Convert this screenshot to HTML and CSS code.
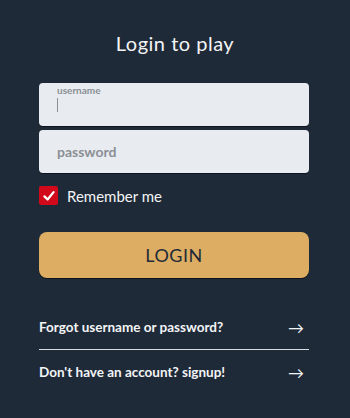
FILE: index.html
```html
<!DOCTYPE html>
<html>
<head>
<meta charset="utf-8">
<link rel="stylesheet" href="styles.css">
</head>
<body>
<main class="login">
  <h1 class="title">Login to play</h1>
  <form class="form">
    <label class="field field-filled">
      <span class="field-label">username</span>
      <span class="caret"></span>
    </label>
    <label class="field">
      <span class="placeholder">password</span>
    </label>
    <label class="remember">
      <span class="check">
        <svg viewBox="0 0 20 20" width="14" height="14"><path d="M3.5 10.5 L8 15 L16.5 4.5" fill="none" stroke="#fff" stroke-width="3.2" stroke-linecap="round" stroke-linejoin="round"/></svg>
      </span>
      <span class="remember-text">Remember me</span>
    </label>
    <button type="button" class="btn">LOGIN</button>
  </form>
  <nav class="links">
    <a class="link">Forgot username or password?<span class="arrow">→</span></a>
    <a class="link">Don't have an account? signup!<span class="arrow">→</span></a>
  </nav>
</main>
</body>
</html>
```

FILE: styles.css
```css
html, body {
  margin: 0;
  padding: 0;
}
body {
  background: #1f2a38;
  font-family: Lato, "Noto Sans", sans-serif;
  color: #f3f4f6;
  width: 350px;
  height: 418px;
  overflow: hidden;
}
.login {
  padding: 30px 41px 0 39px;
  display: flex;
  flex-direction: column;
}
.title {
  margin: 0;
  font-weight: 400;
  font-size: 20px;
  line-height: 26px;
  text-align: center;
  letter-spacing: 0.5px;
  padding-left: 2px;
}
.form {
  margin-top: 27px;
  display: flex;
  flex-direction: column;
}
.field {
  box-sizing: border-box;
  height: 43px;
  background: #e8ebef;
  border-radius: 4px;
  box-shadow: 0 1px 0 #0d141d;
  padding: 0 18px;
  display: flex;
  flex-direction: column;
  justify-content: center;
  margin-bottom: 4px;
}
.field-filled {
  justify-content: flex-start;
  padding-top: 1px;
}
.field-label {
  font-size: 10px;
  line-height: 12px;
  color: #8a8f96;
  font-weight: 700;
}
.caret {
  display: block;
  width: 1px;
  height: 14px;
  background: #8a8f96;
  margin-top: 2px;
}
.placeholder {
  font-size: 14px;
  color: #8b9096;
  font-weight: 700;
}
.remember {
  display: flex;
  align-items: center;
  margin-top: 9px;
  gap: 9px;
}
.check {
  width: 19px;
  height: 19px;
  border-radius: 2px;
  background: #d1091b;
  display: flex;
  align-items: center;
  justify-content: center;
}
.remember-text {
  font-size: 15px;
  color: #f3f4f6;
}
.btn {
  margin-top: 27px;
  height: 46px;
  border: none;
  border-radius: 8px;
  background: #dcad62;
  box-shadow: 0 1px 0 #0d141d;
  color: #1f2a38;
  font-family: Lato, "Noto Sans", sans-serif;
  font-size: 18px;
  letter-spacing: 0.5px;
  padding: 0;
}
.links {
  margin-top: 27px;
  display: flex;
  flex-direction: column;
}
.link {
  display: flex;
  justify-content: space-between;
  align-items: center;
  height: 44px;
  font-size: 13.5px;
  font-weight: 700;
  color: #f3f4f6;
  padding-right: 5px;
}
.link + .link {
  border-top: 1px solid #d8dce2;
}
.arrow {
  font-weight: 400;
  font-size: 16px;
}
```
